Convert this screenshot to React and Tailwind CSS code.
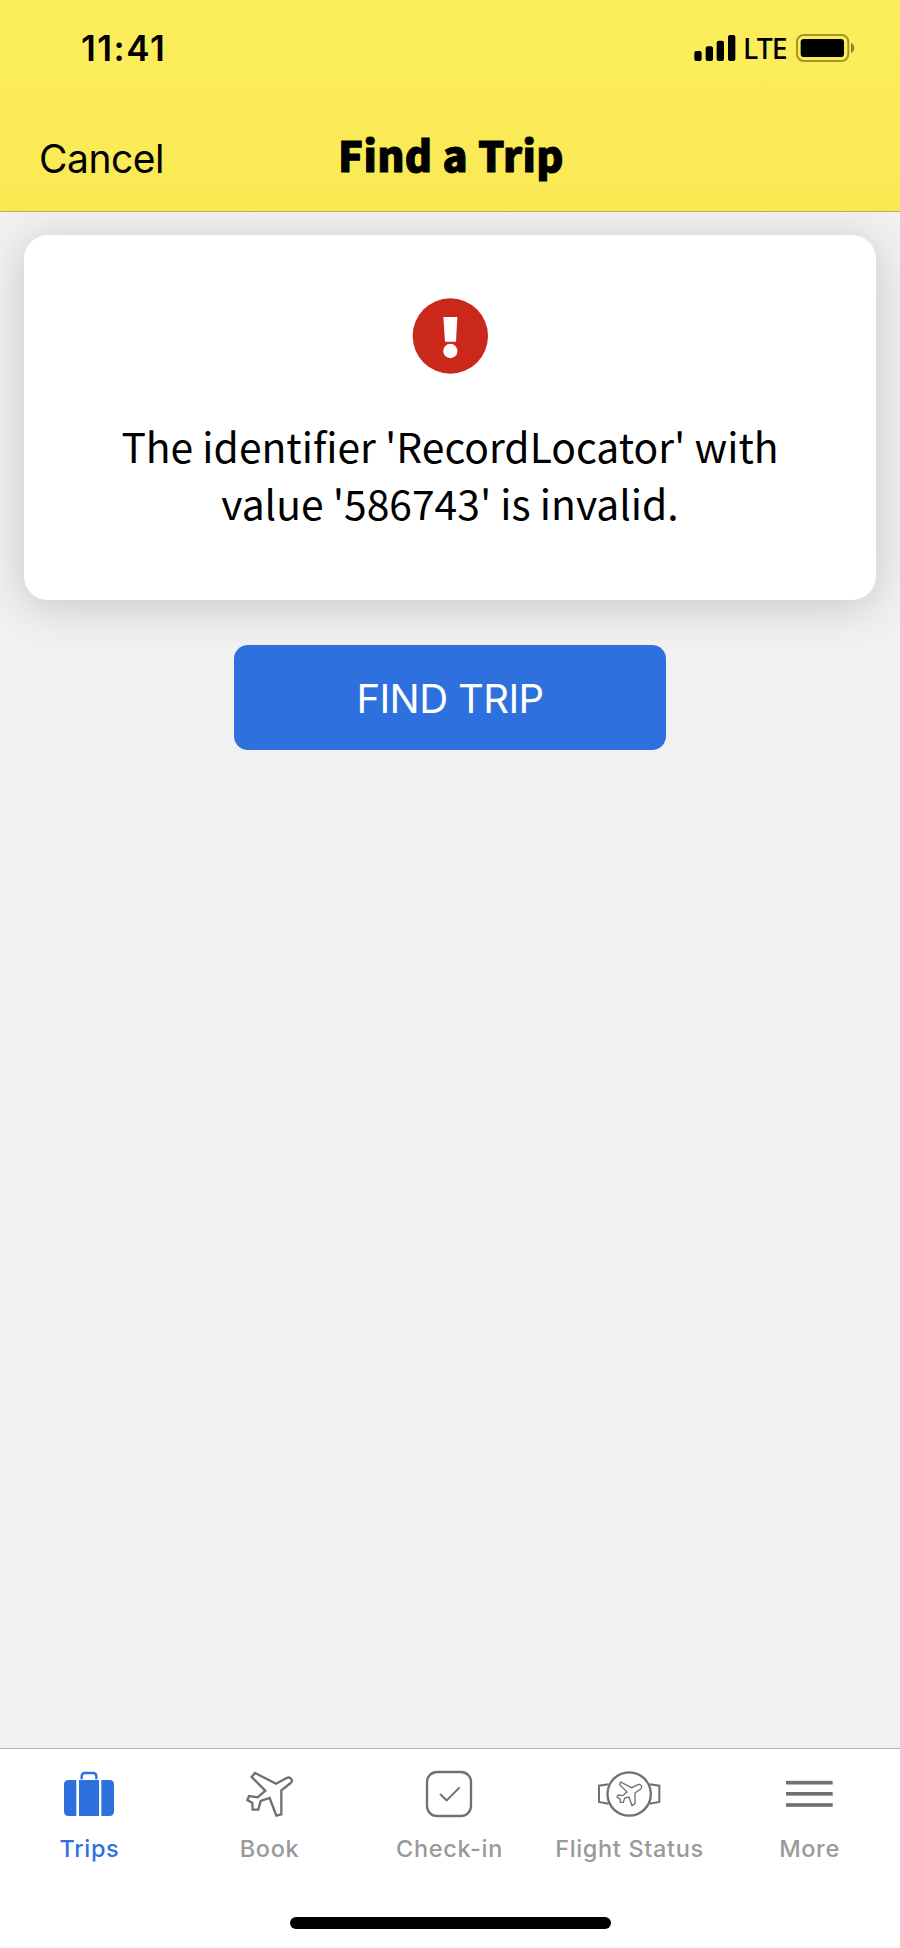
function SignalIcon() {
  return (
    <svg className="h-7 w-[42px]" viewBox="732 102 126 84">
      <rect x="733" y="153" width="22" height="30" rx="6" />
      <rect x="767" y="139" width="22" height="44" rx="6" />
      <rect x="800" y="122" width="22" height="61" rx="6" />
      <rect x="834" y="105" width="22" height="78" rx="6" />
    </svg>
  );
}

function BatteryIcon() {
  return (
    <svg className="h-7 w-[60px]" viewBox="1038 102 180 84">
      <rect x="1041" y="105" width="154" height="78" rx="20" fill="none" stroke="#a3952b" strokeWidth="6" />
      <rect x="1052" y="117" width="130" height="54" rx="10" />
      <path d="M1203 129C1216 134 1216 154 1203 159Z" fill="#8f8424" />
    </svg>
  );
}

function AlertIcon() {
  return (
    <svg className="size-[76px]" viewBox="0 0 228 228">
      <circle cx="115" cy="114" r="113" fill="#c9281a" />
      <path d="M94 57H136L132 131H99Z" fill="#fff" />
      <circle cx="115" cy="159" r="21.500" fill="#fff" />
    </svg>
  );
}

const iconClass = "h-[54px] w-16";
const gray = "#707070";

function TripsIcon() {
  return (
    <svg className={iconClass} viewBox="174 108 192 162" fill="#2f70df">
      <path d="M245 148V139Q245 129 255 129H279Q289 129 289 139V148" fill="none" stroke="#2f70df" strokeWidth="7" />
      <path d="M229 150H206Q192 150 192 164V244Q192 258 206 258H229Z" />
      <rect x="237" y="150" width="60" height="108" />
      <path d="M304 150H328Q342 150 342 164V244Q342 258 328 258H304Z" />
    </svg>
  );
}

function BookIcon() {
  return (
    <svg className={iconClass} viewBox="54 48 192 162" fill="none" stroke={gray} strokeWidth="7">
      <path d="M105 69L168 101L200 84C211 79 221 91 212 99L184 121V193L169 197L149 144L122 153L115 179H98L97 159L82 150L87 138L113 142L136 122L95 81Z" />
    </svg>
  );
}

function CheckInIcon() {
  return (
    <svg className={iconClass} viewBox="204 108 192 162" fill="none" stroke={gray} strokeWidth="7">
      <rect x="231" y="126" width="132" height="132" rx="30" />
      <path d="M270 192L290 211L329 172" strokeWidth="6" />
    </svg>
  );
}

function FlightStatusIcon() {
  return (
    <svg className={iconClass} viewBox="54 48 192 162" fill="none" stroke={gray} strokeWidth="7">
      <circle cx="147.500" cy="132" r="65" />
      <path d="M86 103L57 107V156L86 161" strokeWidth="6" />
      <path d="M209 103L238 107V156L209 161" strokeWidth="6" />
      <path
        d="M122 96L155 113L174 104C181 101 189 109 183 116L165 129V161L156 167L147 141L134 144L130 157H121L120 147L111 141L115 135L128 137L141 126L119 104Z"
        strokeWidth="4"
      />
    </svg>
  );
}

function MoreIcon() {
  return (
    <svg className={iconClass} viewBox="294 108 192 162" fill={gray}>
      <rect x="318" y="152.500" width="140" height="11" />
      <rect x="318" y="186" width="140" height="11" />
      <rect x="318" y="219.500" width="140" height="11" />
    </svg>
  );
}

const tabs = [
  { label: "Trips", Icon: TripsIcon, active: true },
  { label: "Book", Icon: BookIcon },
  { label: "Check-in", Icon: CheckInIcon },
  { label: "Flight Status", Icon: FlightStatusIcon },
  { label: "More", Icon: MoreIcon },
];

export default function App() {
  return (
    <div className="flex h-[1948px] w-[900px] flex-col overflow-hidden bg-[#f1f1f1] font-['Inter','Liberation_Sans',sans-serif] text-black">
      <header className="flex h-[212px] flex-col border-b border-[#b5ad62] bg-linear-to-b from-[#fcee5c] to-[#fae953]">
        <div className="flex h-24 items-center pr-[44px] pl-[81px]">
          <span className="text-[35px] leading-none font-semibold tracking-[1.5px]">11:41</span>
          <div className="ml-auto flex items-center">
            <SignalIcon />
            <span className="ml-[7px] w-[53px] font-['Noto_Sans',sans-serif] text-[28.500px] leading-none font-medium tracking-[-1px]">LTE</span>
            <BatteryIcon />
          </div>
        </div>
        <div className="grid h-[115px] grid-cols-[1fr_auto_1fr] pl-[39px] pr-[37px]">
          <button className="mt-[43px] h-10 text-left text-[39px] leading-10 tracking-[-0.5px]">Cancel</button>
          <h1 className="mt-[38px] h-10 font-['Noto_Sans_CJK_SC',sans-serif] text-[41.500px] leading-10 font-black tracking-[0.4px] [-webkit-text-stroke:0.9px_black]">
            Find a Trip
          </h1>
        </div>
      </header>

      <main className="flex flex-1 flex-col items-center overflow-hidden px-6 pt-[23px]">
        <section className="flex h-[365px] w-full flex-col items-center rounded-3xl bg-white pt-[63px] shadow-[0_6px_44px_rgba(0,0,0,0.18)]">
          <AlertIcon />
          <p className="mt-[43px] text-center font-['Noto_Sans_CJK_SC',sans-serif] text-[40.800px] leading-[57px]">
            The identifier 'RecordLocator' with
            <br />
            value '586743' is invalid.
          </p>
        </section>
        <button className="relative mt-[45px] h-[105px] w-[432px] rounded-[14px] bg-[#2f70df] pt-[3px] text-[40px] leading-none tracking-[-0.6px] text-white">
          FIND TRIP
        </button>
      </main>

      <nav className="flex h-[200px] flex-col items-center border-t border-[#b4b4b4] bg-white">
        <div className="grid w-full grid-cols-5 pt-[17px]">
          {tabs.map(({ label, Icon, active }) => (
            <button key={label} className="flex flex-col items-center">
              <Icon />
              <span
                className={
                  active
                    ? "mt-[13px] mr-px text-[23.500px] leading-8 font-medium tracking-[0.65px] whitespace-nowrap text-[#2f70df]"
                    : "mt-[13px] mr-px text-[23.500px] leading-8 font-medium tracking-[0.65px] whitespace-nowrap text-[#9a9a9a]"
                }
              >
                {label}
              </span>
            </button>
          ))}
        </div>
        <div className="mt-[52px] h-3 w-[321px] rounded-full bg-black" />
      </nav>
    </div>
  );
}
